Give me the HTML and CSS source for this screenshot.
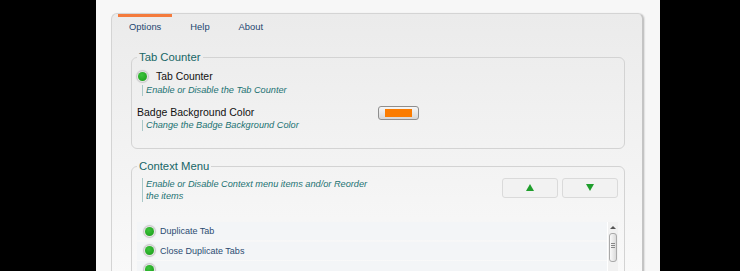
FILE: index.html
```html
<!DOCTYPE html>
<html lang="en">
<head>
<meta charset="utf-8"/>
<meta content="width=device-width, initial-scale=1.0" name="viewport"/>
<title>Tab Counter Options</title>
<link rel="stylesheet" href="styles.css">
</head>
<body>
<div class="page">
  <div class="panel">
    <ul class="tabs">
      <li class="active">Options</li>
      <li>Help</li>
      <li>About</li>
    </ul>

    <fieldset class="group">
      <legend>Tab Counter</legend>
      <div class="option">
        <span class="radio"></span>
        <span>Tab Counter</span>
      </div>
      <p class="hint">Enable or Disable the Tab Counter</p>
      <div class="option color-row">
        <span class="label">Badge Background Color</span>
        <span class="swatch"><span class="fill"></span></span>
      </div>
      <p class="hint">Change the Badge Background Color</p>
    </fieldset>

    <fieldset class="group context">
      <legend>Context Menu</legend>
      <div class="menu-head">
        <p class="hint wide">Enable or Disable Context menu items and/or Reorder the items</p>
        <div class="order">
          <button type="button"><svg width="8" height="7" viewBox="0 0 8 7"><path d="M4 0L8 7H0Z" fill="#1f9e2c"/></svg></button>
          <button type="button"><svg width="8" height="7" viewBox="0 0 8 7"><path d="M0 0H8L4 7Z" fill="#1f9e2c"/></svg></button>
        </div>
      </div>
      <div class="list">
        <ul class="items">
          <li><span class="radio"></span>Duplicate Tab</li>
          <li><span class="radio"></span>Close Duplicate Tabs</li>
          <li><span class="radio"></span></li>
        </ul>
        <div class="scroll">
          <span class="arrow"></span>
          <span class="thumb"></span>
        </div>
      </div>
    </fieldset>
  </div>
</div>
</body>
</html>
```

FILE: styles.css
```css
body {
  margin: 0;
  background: #000;
  font-family: "Liberation Sans", Arial, sans-serif;
  height: 271px;
  overflow: hidden;
}
.page {
  margin-left: 96px;
  width: 564px;
  height: 271px;
  box-sizing: border-box;
  padding: 13px 0 0 15px;
  background: #f7f7f7;
}
.panel {
  width: 533px;
  height: 300px;
  box-sizing: border-box;
  border: 1px solid #d4d4d4;
  border-right: 2px solid #c4c4c4;
  border-radius: 6px 6px 0 0;
  background: linear-gradient(#ebebeb, #f2f2f2 130px, #f9f9f9 260px);
  box-shadow: 1px 0 1px #e0e0e0;
}
.tabs {
  display: flex;
  gap: 7px;
  list-style: none;
  margin: 0;
  padding: 0 0 0 6px;
}
.tabs li {
  border-top: 3px solid transparent;
  padding: 4px 11px 0;
  font-size: 9.4px;
  line-height: 12px;
  color: #234670;
}
.tabs .active {
  border-top-color: #f47b3d;
}
.group {
  margin: 18px 17px 0 19px;
  padding: 5px 6px 17px 5px;
  border: 1px solid #d3d3d3;
  border-radius: 6px;
  min-width: 0;
}
.group legend {
  padding: 0 2px;
  font-size: 11.3px;
  line-height: 13px;
  color: #176666;
}
.context {
  margin-top: 11px;
}
.option {
  display: flex;
  align-items: center;
  height: 14px;
  font-size: 10.4px;
  color: #111;
}
.radio {
  flex-shrink: 0;
  width: 9px;
  height: 9px;
  margin: 0 9px 0 1px;
  border-radius: 50%;
  background: radial-gradient(circle at 40% 35%, #3cc43c, #179a17);
  box-shadow: 0 0 0 1px #e4e4e4, 0 0 1px 2px #c6c6c6;
}
.hint {
  margin: 1.5px 0 0 5px;
  padding-left: 3px;
  border-left: 1px solid #a9c8c8;
  font-size: 9.2px;
  line-height: 11px;
  font-style: italic;
  color: #227272;
}
.color-row {
  margin-top: 9px;
  font-size: 10.5px;
}
.color-row + .hint {
  margin-top: 1px;
}
.label {
  width: 241px;
}
.swatch {
  width: 41px;
  height: 14px;
  margin-top: 3px;
  box-sizing: border-box;
  padding: 2px 6px;
  border: 1px solid #8e8e8e;
  border-radius: 3px;
  background: linear-gradient(#f6f6f6, #d6d6d6);
}
.fill {
  display: block;
  height: 8px;
  background: #fb7c00;
}
.menu-head {
  display: flex;
  align-items: flex-start;
}
.hint.wide {
  width: 230px;
  margin-top: 0;
  line-height: 12.4px;
}
.order {
  display: flex;
  gap: 4px;
  margin-left: auto;
}
.order button {
  width: 56px;
  height: 20px;
  padding: 0;
  border: 1px solid #dadada;
  border-radius: 3px;
  background: #f2f2f2;
  display: flex;
  align-items: center;
  justify-content: center;
}
.list {
  display: flex;
  margin-top: 20px;
}
.items {
  flex: 1;
  list-style: none;
  margin: 0;
  padding: 0;
}
.items li {
  display: flex;
  align-items: center;
  height: 18px;
  margin-bottom: 1.3px;
  padding-left: 8px;
  background: #f3f5f7;
  font-size: 9px;
  color: #2b4c72;
}
.items .radio {
  margin: 0 6px 0 0;
}
.scroll {
  width: 11px;
  height: 60px;
  display: flex;
  flex-direction: column;
  align-items: center;
  background: #f1f1f1;
  border-left: 1px solid #fff;
  box-sizing: border-box;
}
.arrow {
  margin-top: 4px;
  border: 3px solid transparent;
  border-top: 0;
  border-bottom: 3px solid #555;
}
.thumb {
  width: 8px;
  height: 29px;
  margin-top: 4px;
  box-sizing: border-box;
  border: 1px solid #a9a9a9;
  border-radius: 3px;
  background:
    linear-gradient(#888, #888) center 9px / 4px 1px no-repeat,
    linear-gradient(#888, #888) center 11px / 4px 1px no-repeat,
    linear-gradient(#888, #888) center 13px / 4px 1px no-repeat,
    linear-gradient(90deg, #fafafa, #dadada);
}
```
